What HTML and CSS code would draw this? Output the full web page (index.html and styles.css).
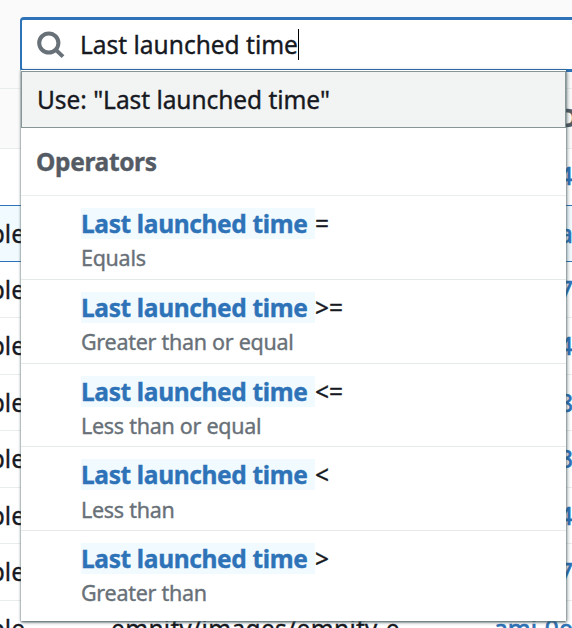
FILE: index.html
```
<!DOCTYPE html>
<html lang="en">
<head>
<meta charset="utf-8">
<title>Instances</title>
<link rel="stylesheet" href="styles.css">
</head>
<body>
<div class="toolbar">
  <div class="search">
    <svg class="search-icon" viewBox="0 0 28 28"><circle cx="11.8" cy="12" r="9.6"/><path d="M18.6 18.6 26 25.6"/></svg>
    <span class="query">Last launched time</span><span class="caret"></span>
    <div class="dropdown">
      <div class="use">Use: "Last launched time"</div>
      <div class="group">Operators</div>
      <div class="option"><div class="title"><mark>Last launched time </mark><span>=</span></div><div class="desc">Equals</div></div>
      <div class="option"><div class="title"><mark>Last launched time </mark><span>&gt;=</span></div><div class="desc">Greater than or equal</div></div>
      <div class="option"><div class="title"><mark>Last launched time </mark><span>&lt;=</span></div><div class="desc">Less than or equal</div></div>
      <div class="option"><div class="title"><mark>Last launched time </mark><span>&lt;</span></div><div class="desc">Less than</div></div>
      <div class="option"><div class="title"><mark>Last launched time </mark><span>&gt;</span></div><div class="desc">Greater than</div></div>
    </div>
  </div>
</div>
<div class="table">
  <div class="row head"><span></span><span></span><span>AMI ID</span></div>
  <div class="row first"><span></span><span></span><a>ami-04</a></div>
  <div class="row selected"><span>ple</span><span></span><a>ami-0a</a></div>
  <div class="row"><span>ple</span><span></span><a>ami-07</a></div>
  <div class="row"><span>ple</span><span></span><a>ami-04</a></div>
  <div class="row"><span>ple</span><span></span><a>ami-08</a></div>
  <div class="row"><span>ple</span><span></span><a>ami-03</a></div>
  <div class="row"><span>ple</span><span></span><a>ami-04</a></div>
  <div class="row"><span>ple</span><span></span><a>ami-07</a></div>
  <div class="row"><span>ple</span><span class="name">emnify/images/emnify-e</span><a>ami-0e</a></div>
</div>
</body>
</html>
```
FILE: styles.css
```
* { box-sizing: border-box; }
body {
  margin: 0;
  width: 572px;
  height: 628px;
  overflow: hidden;
  background: #fff;
  color: #16191f;
  font: 24.5px/36px "Noto Sans", sans-serif;
  white-space: nowrap;
  -webkit-text-stroke: .35px currentColor;
}
.toolbar {
  height: 88px;
  padding: 17px 0 0 20px;
  background: #fafafa;
}
.search {
  position: relative;
  display: flex;
  align-items: center;
  width: 552px;
  height: 55px;
  padding-left: 15px;
  border: solid #2e73b8;
  border-width: 3px 0 3px 2px;
  border-radius: 4px 0 0 4px;
  background: #fff;
}
.search-icon {
  width: 28px;
  height: 28px;
  margin-right: 15px;
  fill: none;
  stroke: #687078;
  stroke-width: 4;
}
.caret { width: 1px; height: 31px; background: #000; }
.dropdown {
  position: absolute;
  z-index: 2;
  left: -1px;
  top: 50px;
  width: 545px;
  height: 551px;
  padding-top: 1px;
  background: #fff;
  box-shadow: 0 1px 2px #53696f, 1px 1px 4px rgba(0, 28, 36, .45);
}
.use {
  height: 57px;
  padding: 10px 15px;
  border: 1px solid #879596;
  background: #f2f3f3;
  letter-spacing: -.05px;
}
.group {
  height: 68px;
  padding: 16px 15px;
  border-bottom: 1px solid #eaeded;
  color: #545b64;
  font-weight: 700;
  letter-spacing: -.35px;
}
.option {
  height: 83.75px;
  padding: 12px 0 0 60px;
  border-bottom: 1px solid #e6e9e9;
}
.option:last-child { border: 0; }
.title { display: flex; height: 31px; line-height: 32px; }
mark {
  width: 234px;
  background: #f1faff;
  color: #2e73b8;
  font-weight: 700;
  letter-spacing: -.36px;
  white-space: pre;
}
.desc {
  margin-top: 3.4px;
  color: #687078;
  font-size: 21.5px;
  line-height: 32px;
  letter-spacing: -.28px;
}
.row {
  display: grid;
  grid-template-columns: 25px 469px 78px;
  height: 56.5px;
  border-top: 1px solid #eaeded;
  line-height: 55px;
}
.row > :first-child { display: flex; justify-content: flex-end; }
.name { padding-left: 86px; letter-spacing: .33px; }
.row a { color: #2e73b8; -webkit-text-stroke-width: .7px; }
.row.head { height: 60px; line-height: 57px; background: #fafafa; color: #545b64; font-weight: 700; }
.row.first { height: 57px; line-height: 53px; }
.row.selected { height: 57px; background: #f1faff; border-top-color: #2e73b8; border-bottom: 1px solid #2e73b8; }
.row.selected + .row { border-top: 0; height: 55.4px; }
```
